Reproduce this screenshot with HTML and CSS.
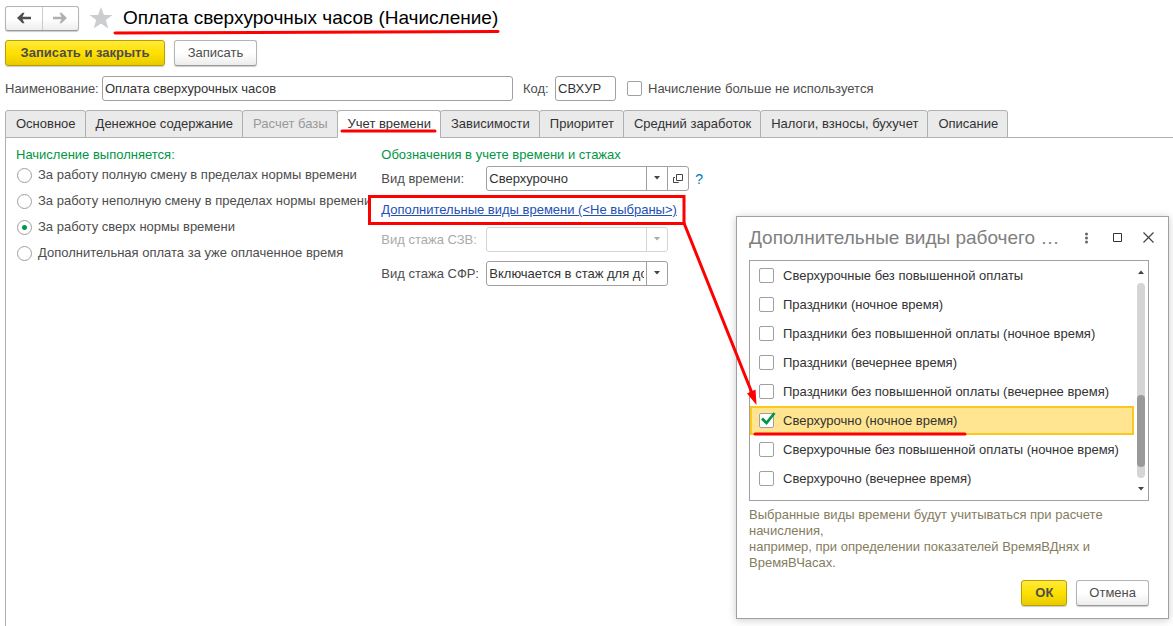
FILE: index.html
```html
<!DOCTYPE html>
<html lang="ru">
<head>
<meta charset="utf-8">
<title>Оплата сверхурочных часов (Начисление)</title>
<link rel="stylesheet" href="styles.css">
</head>
<body>
<main class="page">
  <header class="title-bar">
    <div class="nav-buttons">
      <button type="button" aria-label="Назад"><svg width="16" height="12" viewBox="0 0 16 12"><path d="M1 6L6.500 .8H8.500L6.500 4.700H15V7.300H6.500L8.500 11.200H6.500Z" fill="#4d4d4d"/></svg></button>
      <button type="button" aria-label="Вперед"><svg width="16" height="12" viewBox="0 0 16 12"><path d="M15 6L9.500 .8H7.500L9.500 4.800H1V7.200H9.500L7.500 11.200H9.500Z" fill="#b0b0b0"/></svg></button>
    </div>
    <svg class="star" width="24" height="22" viewBox="0 0 24 22"><path d="M12 0L14.900 7.900H23.500L16.800 13L19.300 21.500L12 16.500L4.700 21.500L7.200 13L.5 7.900H9.100Z" fill="#cbcdcf"/></svg>
    <h1>Оплата сверхурочных часов (Начисление)</h1>
  </header>

  <div class="commands">
    <button type="button" class="btn primary save">Записать и закрыть</button>
    <button type="button" class="btn write">Записать</button>
  </div>

  <div class="fields">
    <label class="name-label" for="name">Наименование:</label>
    <input class="text name" id="name" type="text" value="Оплата сверхурочных часов">
    <label class="code-label" for="code">Код:</label>
    <input class="text code" id="code" type="text" value="СВХУР">
    <label class="check"><input type="checkbox">Начисление больше не используется</label>
  </div>

  <nav class="tabs" role="tablist">
    <button type="button" role="tab">Основное</button>
    <button type="button" role="tab">Денежное содержание</button>
    <button type="button" role="tab" disabled>Расчет базы</button>
    <button type="button" role="tab" class="active" aria-selected="true">Учет времени</button>
    <button type="button" role="tab">Зависимости</button>
    <button type="button" role="tab">Приоритет</button>
    <button type="button" role="tab">Средний заработок</button>
    <button type="button" role="tab">Налоги, взносы, бухучет</button>
    <button type="button" role="tab">Описание</button>
  </nav>

  <section class="panel">
    <fieldset class="mode">
      <legend>Начисление выполняется:</legend>
      <label><input type="radio" name="mode">За работу полную смену в пределах нормы времени</label>
      <label><input type="radio" name="mode">За работу неполную смену в пределах нормы времени</label>
      <label><input type="radio" name="mode" checked>За работу сверх нормы времени</label>
      <label><input type="radio" name="mode">Дополнительная оплата за уже оплаченное время</label>
    </fieldset>
    <div class="marks">
      <h2>Обозначения в учете времени и стажах</h2>
      <div class="row">
        <label for="kind">Вид времени:</label>
        <div class="combo joined"><select id="kind"><option>Сверхурочно</option></select><svg width="7" height="4" viewBox="0 0 7 4"><path d="M0 0H6L3 3.500Z" fill="#444"/></svg></div>
        <button type="button" class="open" aria-label="Открыть"><svg width="10" height="10" viewBox="0 0 10 10"><path d="M3.500 .5H9.500V6.500H3.500ZM2 3.500H.5V8.500H5.500V8" fill="none" stroke="#444"/></svg></button>
        <button type="button" class="help" aria-label="Справка">?</button>
      </div>
      <a class="extra" href="#kinds">Дополнительные виды времени (&lt;Не выбраны&gt;)</a>
      <div class="row disabled">
        <label for="szv">Вид стажа СЗВ:</label>
        <div class="combo"><select id="szv" disabled><option></option></select><svg width="7" height="4" viewBox="0 0 7 4"><path d="M0 0H6L3 3.500Z" fill="#aaa"/></svg></div>
      </div>
      <div class="row">
        <label for="sfr">Вид стажа СФР:</label>
        <div class="combo"><select id="sfr"><option>Включается в стаж для досрочного назначения</option></select><svg width="7" height="4" viewBox="0 0 7 4"><path d="M0 0H6L3 3.500Z" fill="#444"/></svg></div>
      </div>
    </div>
  </section>
</main>

<section class="dialog" id="kinds" role="dialog" aria-labelledby="kinds-title">
  <header>
    <h2 id="kinds-title">Дополнительные виды рабочего …</h2>
    <button type="button" aria-label="Меню"><svg width="12" height="12" viewBox="0 0 12 12"><g fill="#666"><circle cx="5.500" cy="2" r="1.500"/><circle cx="5.500" cy="6" r="1.500"/><circle cx="5.500" cy="10" r="1.500"/></g></svg></button>
    <button type="button" aria-label="Развернуть"><svg width="12" height="12" viewBox="0 0 12 12"><path d="M1.500 1.500H9.500V9.500H1.500Z" fill="none" stroke="#333"/></svg></button>
    <button type="button" aria-label="Закрыть"><svg width="12" height="12" viewBox="0 0 12 12"><path d="M.5 .5L10.500 10.500M10.500 .5L.5 10.500" fill="none" stroke="#444" stroke-width="1.200"/></svg></button>
  </header>
  <div class="list">
    <div class="items">
      <label><input type="checkbox">Сверхурочные без повышенной оплаты</label>
      <label><input type="checkbox">Праздники (ночное время)</label>
      <label><input type="checkbox">Праздники без повышенной оплаты (ночное время)</label>
      <label><input type="checkbox">Праздники (вечернее время)</label>
      <label><input type="checkbox">Праздники без повышенной оплаты (вечернее время)</label>
      <label class="selected"><input type="checkbox" checked>Сверхурочно (ночное время)<svg class="tick" width="16" height="14" viewBox="0 0 16 14"><path d="M2 6.500L6.500 11L14.500 1" fill="none" stroke="#009646" stroke-width="2.800"/></svg></label>
      <label><input type="checkbox">Сверхурочные без повышенной оплаты (ночное время)</label>
      <label><input type="checkbox">Сверхурочно (вечернее время)</label>
    </div>
    <div class="scroll">
      <svg width="7" height="4" viewBox="0 0 7 4"><path d="M0 4H6L3 .5Z" fill="#444"/></svg>
      <div class="track"><div class="thumb"></div></div>
      <svg width="7" height="4" viewBox="0 0 7 4"><path d="M0 0H6L3 3.500Z" fill="#444"/></svg>
    </div>
  </div>
  <p>Выбранные виды времени будут учитываться при расчете начисления,<br>например, при определении показателей ВремяВДнях и ВремяВЧасах.</p>
  <footer>
    <button type="button" class="btn primary ok">ОК</button>
    <button type="button" class="btn">Отмена</button>
  </footer>
</section>

<svg class="notes" width="1173" height="626" viewBox="0 0 1173 626" aria-hidden="true">
  <g fill="none" stroke="#f00" stroke-width="3" stroke-linecap="round">
    <path d="M115 33L498 31.500M342 131H435M755 434H965" />
    <path d="M369.500 196.500H684V223.500H369.500Z"/>
    <path d="M684 223L752 393"/>
  </g>
  <path d="M756.500 405L747 393.500L755.500 389.500Z" fill="#f00"/>
</svg>
</body>
</html>
```
FILE: styles.css
```css
* { box-sizing: border-box; }
body {
  margin: 0;
  min-height: 100vh;
  position: relative;
  background: #fff;
  color: #4d4d4d;
  font: 13px/16px "Liberation Sans", Arial, sans-serif;
}
button, input, select { font: inherit; color: inherit; margin: 0; }
h1, h2, p, fieldset, legend { margin: 0; padding: 0; border: 0; font-weight: normal; }
svg { display: block; }

.page { display: flex; flex-direction: column; min-height: 100vh; padding: 5px 0 0 5px; }
.title-bar { display: flex; align-items: center; height: 26px; }
.nav-buttons {
  display: flex;
  width: 74px;
  height: 25px;
  border: 1px solid #b4b4b4;
  border-bottom-color: #999;
  border-radius: 3px;
  background: linear-gradient(#fff 50%, #eee);
  box-shadow: 0 1px 1px #ccc;
}
.nav-buttons button {
  flex: 1;
  display: grid;
  place-items: center;
  padding: 0;
  border: 0;
  background: none;
}
.nav-buttons button + button { border-left: 1px solid #ccc; }
.star { margin: 0 10px; }
h1 { font-size: 19px; line-height: 24px; color: #000; }

.commands { display: flex; gap: 9px; margin-top: 9px; }
.btn {
  height: 26px;
  padding: 0 12px;
  border: 1px solid #b4b4b4;
  border-bottom-color: #999;
  border-radius: 3px;
  background: linear-gradient(#fff 50%, #ececec);
  box-shadow: 0 1px 1px #ccc;
}
.btn.primary {
  border-color: #b9a000;
  background: linear-gradient(#ffea3c, #ffe000 50%, #e8cb00);
  font-weight: bold;
}
.save { width: 160px; }
.write { width: 83px; }
.ok { width: 46px; }

.fields { display: flex; align-items: center; margin-top: 10px; }
.text {
  height: 25px;
  padding: 0 2px;
  border: 1px solid #a0a0a0;
  border-radius: 3px;
  color: #333;
}
.name-label { width: 97px; }
.name { width: 411px; }
.code-label { width: 32px; margin-left: 10px; }
.code { width: 61px; }
.check { display: flex; align-items: center; gap: 6px; margin-left: 11px; }
input[type="checkbox"], input[type="radio"] {
  appearance: none;
  flex: none;
  width: 15px;
  height: 15px;
  border: 1px solid #a0a0a0;
  border-radius: 2px;
  background: #fff;
}
input[type="radio"] { border-radius: 50%; }
input[type="radio"]:checked { background: radial-gradient(circle, #009646 2px, #fff 3px); }

.tabs { display: flex; margin-top: 9px; position: relative; }
.tabs button {
  height: 28px;
  padding: 0 9px 0 10px;
  margin-right: -1px;
  border: 1px solid #b0b0b0;
  border-radius: 3px 3px 0 0;
  background: #eaeaea;
  color: #333;
  white-space: nowrap;
}
.tabs button:disabled { color: #999; }
.tabs .active { background: #fff; border-bottom-color: #fff; }

.panel {
  flex: 1;
  display: flex;
  margin-top: -1px;
  padding: 9px 10px;
  border: solid #b0b0b0;
  border-width: 1px 0 0 1px;
}
.mode { flex: none; width: 355px; margin-right: 10px; overflow: hidden; }
.mode legend, .marks h2 { color: #009646; font-size: 13px; line-height: 16px; }
.mode label {
  display: flex;
  align-items: center;
  gap: 6px;
  height: 26px;
  padding-left: 1px;
  white-space: nowrap;
}
.mode legend { margin-bottom: -1px; }
.row { display: flex; align-items: center; height: 25px; margin-top: 9px; }
.marks h2 + .row { margin-top: 3px; }
.row label { width: 105px; white-space: nowrap; }
.combo { position: relative; width: 182px; height: 25px; }
.combo select {
  appearance: none;
  width: 100%;
  height: 100%;
  padding: 0 23px 0 2px;
  border: 1px solid #a0a0a0;
  border-radius: 3px;
  background: linear-gradient(#a0a0a0, #a0a0a0) right 20px top / 1px 100% no-repeat #fff;
  color: #333;
}
.combo svg { position: absolute; right: 7px; top: 10px; pointer-events: none; }
.joined select { border-radius: 3px 0 0 3px; }
.open {
  display: grid;
  place-items: center;
  width: 22px;
  height: 25px;
  margin-left: -1px;
  padding: 0;
  border: 1px solid #a0a0a0;
  border-radius: 0 3px 3px 0;
  background: #fff;
}
.help { padding: 0 6px; border: 0; background: none; color: #0078be; font-size: 14px; }
.extra { display: block; margin: 11px 0 9px; color: #2450b4; }
.disabled { color: #aaa; }
.disabled select {
  border-color: #d5d5d5;
  background-image: linear-gradient(#d5d5d5, #d5d5d5);
  opacity: 1;
}

.dialog {
  position: absolute;
  top: 216px;
  right: 4px;
  width: 433px;
  padding: 0 19px 12px 12px;
  border: 1px solid #a0a0a0;
  background: #fff;
  box-shadow: 0 1px 8px #ccc;
}
.dialog header { display: flex; align-items: center; height: 41px; margin: 0 -15px 2px 0; }
.dialog h2 {
  flex: 1;
  font-size: 19px;
  line-height: 24px;
  color: #808080;
  white-space: nowrap;
}
.dialog header button {
  display: grid;
  place-items: center;
  width: 31px;
  height: 26px;
  padding: 0;
  border: 0;
  background: none;
}
.list { display: flex; height: 241px; border: 1px solid #a0a0a0; color: #333; }
.items { flex: 1; min-width: 0; }
.items label {
  position: relative;
  display: flex;
  align-items: center;
  gap: 9px;
  height: 29px;
  padding-left: 9px;
  white-space: nowrap;
}
.items .selected {
  border: 2px solid #fcc81e;
  padding-left: 7px;
  background: #ffe591;
}
.tick { position: absolute; left: 8px; top: 4px; }
.scroll {
  display: flex;
  flex-direction: column;
  align-items: center;
  gap: 9px;
  width: 14px;
  padding: 9px 0;
}
.track {
  flex: 1;
  display: flex;
  flex-direction: column;
  justify-content: flex-end;
  width: 8px;
  padding-bottom: 11px;
  border-radius: 4px;
  background: #d5d5d5;
}
.thumb { height: 39%; border-radius: 4px; background: #999; }
.dialog p { margin-top: 6px; color: #857d60; }
.dialog footer { display: flex; justify-content: flex-end; gap: 9px; margin-top: 9px; }

.notes { position: absolute; top: 0; left: 0; pointer-events: none; }
```
